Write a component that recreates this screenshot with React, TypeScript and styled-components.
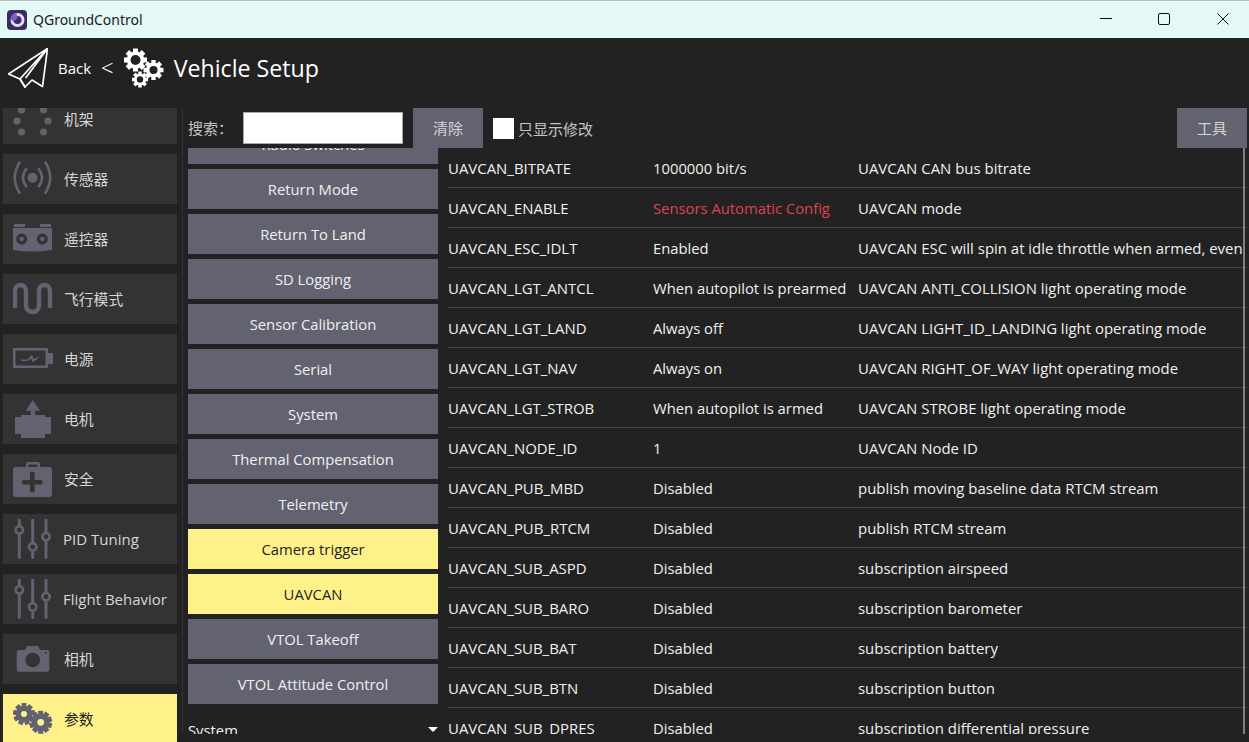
import React from "react";
import styled, { createGlobalStyle } from "styled-components";

const Global = createGlobalStyle`
  html, body { margin: 0; padding: 0; background: #222222; }
  body { font-family: "Open Sans", "Noto Sans CJK SC", sans-serif; overflow: hidden; }
  * { box-sizing: border-box; }
`;

const Window = styled.div`
  width: 1249px; height: 742px; overflow: hidden; display: flex; flex-direction: column; background: #222222;
`;
const TitleBar = styled.div`
  height: 38px; flex: none; background: #e4f8f8; border-top: 1px solid #bdbdbd;
  display: flex; align-items: center; padding-left: 7px; color: #1a1a1a;
  font-family: "Noto Sans", "Open Sans", sans-serif; font-size: 14px;
`;
const AppName = styled.span` margin-left: 6px; margin-right: auto; `;
const WinControls = styled.div` display: flex; align-items: center; gap: 46px; padding-right: 20px; margin-top: -1px; `;
const WinBtn = styled.div`
  width: 12px; height: 12px; display: flex;
  &:last-child { margin-left: 1px; }
`;

const TopBar = styled.div`
  height: 70px; flex: none; display: flex; align-items: center; color: #fff; padding: 0 0 10px 8px;
`;
const BackText = styled.span` font-size: 15px; margin-left: 10px; `;
const Chevron = styled.span` font-size: 22px; margin: 0 10px 0 10px; position: relative; top: -1px; font-weight: 300; `;
const Heading = styled.span` font-size: 23.2px; margin-left: 10px; `;

const Body = styled.div` flex: 1; display: flex; min-height: 0; `;
const Sidebar = styled.div` width: 182px; flex: none; padding-left: 3px; overflow: hidden; height: 634px; `;
const Divider = styled.div` width: 1px; height: 625px; flex: none; background: #333; `;
const SideScroll = styled.div` margin-top: -14px; display: flex; flex-direction: column; gap: 10px; `;
const SideBtn = styled.div<{ $active?: boolean }>`
  width: 174px; height: 50px; flex: none; display: flex; align-items: center;
  background: ${(p) => (p.$active ? "#fff18a" : "#333333")};
  color: ${(p) => (p.$active ? "#222" : "#d6d6d6")};
  font-size: 15px; padding-left: 10px;
`;
const SideLabel = styled.span<{ $cjk?: boolean }>`
  margin-top: ${(p) => (p.$cjk ? "-2px" : "0")};
  margin-left: ${(p) => (p.$cjk ? "1px" : "0")};
  font-size: ${(p) => (p.$cjk ? "14.8px" : "15px")};
`;
const SideIcon = styled.svg` width: 40px; height: 40px; flex: none; margin-right: 10px; `;

const Main = styled.div` flex: 1; display: flex; flex-direction: column; min-width: 0; padding-left: 5px; `;
const SearchRow = styled.div` height: 40px; flex: none; display: flex; align-items: center; color: #c4c4c4; font-size: 15px; `;
const SearchLabel = styled.span` width: 55px; margin-top: -1px; `;
const SearchInput = styled.div` width: 160px; height: 32px; background: #fff; border: 1px solid #a8a8a8; `;
const ToolBtn = styled.div<{ $push?: boolean }>`
  width: 70px; height: 40px; padding-bottom: 2px; background: #636270; color: #d4d4d4; display: flex; align-items: center; justify-content: center;
  font-size: 15px; margin-left: ${(p) => (p.$push ? "auto" : "10px")}; margin-right: ${(p) => (p.$push ? "2px" : "0")};
`;
const Check = styled.div` width: 21px; height: 21px; background: #fff; margin-left: 10px; margin-right: 4px; `;
const Content = styled.div` display: flex; height: 586px; flex: none; `;
const Groups = styled.div` width: 250px; flex: none; overflow: hidden; `;
const GroupScroll = styled.div` margin-top: -24px; display: flex; flex-direction: column; gap: 5px; `;
const GroupBtn = styled.div<{ $active?: boolean }>`
  height: 40px; flex: none; display: flex; align-items: center; justify-content: center;
  background: ${(p) => (p.$active ? "#fff18a" : "#636270")};
  color: ${(p) => (p.$active ? "#222" : "#f0f0f0")}; font-size: 14.8px;
`;
const GroupHeader = styled.div`
  height: 24px; margin-top: 5px; padding-top: 6px; display: flex; align-items: flex-start; justify-content: space-between; color: #f0f0f0; font-size: 14.8px;
`;
const Caret = styled.div`
  width: 0; height: 0; border-left: 5px solid transparent; border-right: 5px solid transparent; border-top: 5px solid #fff; margin-top: 7px;
`;
const Table = styled.div` flex: 1; min-width: 0; margin-left: 10px; margin-right: 2px; overflow: hidden; position: relative; `;
const Row = styled.div`
  height: 40px; padding-top: 1px; display: grid; grid-template-columns: 205px 205px 1fr; align-items: center; border-bottom: 1px solid #444; color: #f0f0f0; font-size: 14.95px; white-space: nowrap;
`;
const Cell = styled.span` overflow: hidden; `;
const ValueCell = styled.span<{ $red?: boolean }>` color: ${(p) => (p.$red ? "#dd444e" : "inherit")}; overflow: hidden; font-size: 14.8px; `;
const ScrollBar = styled.div` position: absolute; right: 2px; top: 0; width: 2px; height: 100%; background: #808080; `;

const f = "#636270";
const Frame = () => (
  <SideIcon viewBox="0 0 40 40">
    {[[8.5, 11], [30.5, 11], [4, 22], [35, 22], [8.5, 33], [30.5, 33]].map(([x, y], i) => (
      <circle key={i} cx={x} cy={y} r="3.6" fill={f} />
    ))}
  </SideIcon>
);
const Sensor = () => (
  <SideIcon viewBox="0 0 40 40" fill="none" stroke={f} strokeWidth="2.600">
    <circle cx="19.500" cy="18.700" r="5" fill={f} stroke="none" />
    <path d="M13.700 9.300Q6.300 18.700 13.700 28.100M25.300 9.300Q32.700 18.700 25.300 28.100" />
    <path d="M7 2.700Q-3.400 18.700 7 34.700M32 2.700Q42.400 18.700 32 34.700" />
  </SideIcon>
);
const Radio = () => (
  <SideIcon viewBox="0 0 40 40">
    <path d="M0 9h39v22q-19.500 3-39 0z" fill={f} />
    <path d="M1 5h11v3H1zM27 5h11v3H27z" fill={f} />
    <circle cx="8.700" cy="20" r="5.500" fill="#333" />
    <circle cx="8.700" cy="20" r="2.200" fill={f} />
    <circle cx="29.300" cy="20" r="5.500" fill="#333" />
    <circle cx="29.300" cy="20" r="2.200" fill={f} />
  </SideIcon>
);
const Wave = () => (
  <SideIcon viewBox="0 0 40 40" fill="none">
    <path d="M2 29V11.500a5.500 5.500 0 0 1 11 0V26.500a6.500 6.500 0 0 0 13 0V11.500a5.500 5.500 0 0 1 11 0V29" stroke={f} strokeWidth="4.400" />
  </SideIcon>
);
const Battery = () => (
  <SideIcon viewBox="0 0 40 40">
    <path d="M0 9h35v5h5v11h-5v4H0zM2.500 11.500v15h30v-15z" fill={f} fillRule="evenodd" />
    <path d="M8 20.500h7l4-5 1.500 4.500 7-3-7.500 6.500-2-4-3 2.500H8z" fill={f} />
  </SideIcon>
);
const Motor = () => (
  <SideIcon viewBox="0 0 40 40">
    <path d="M19.700 1l7.300 10.700h-5v4.300h-4.300v-4.300h-5z" fill={f} />
    <path d="M8 16h24v2h6v17h-6v4H8v-4H2V18h6z" fill={f} />
  </SideIcon>
);
const Kit = () => (
  <SideIcon viewBox="0 0 40 40">
    <path fillRule="evenodd" fill={f} d="M13 8V5q0-2 2-2h10q2 0 2 2v3h9q3 0 3 3v24q0 3-3 3H3q-3 0-3-3V11q0-3 3-3zM15.500 5.500V8h9V5.500zM17 13v8H9.300v4.600H17v7.700h4.600v-7.700h7.700V21h-7.700v-8z" />
  </SideIcon>
);
const Sliders = () => (
  <SideIcon viewBox="0 0 40 40" fill="none" stroke={f}>
    <path d="M6.300 1v37.500M19.700 1v37.500M33 1v37.500" strokeWidth="3" strokeLinecap="round" />
    <circle cx="6.300" cy="11" r="3.700" fill="#333" strokeWidth="2.600" />
    <circle cx="19.700" cy="28" r="3.700" fill="#333" strokeWidth="2.600" />
    <circle cx="33" cy="17.700" r="3.700" fill="#333" strokeWidth="2.600" />
  </SideIcon>
);
const Camera = () => (
  <SideIcon viewBox="0 0 40 40">
    <path fillRule="evenodd" fill={f} d="M6 11h6l2-4h11l2 4h7q2.300 0 2.300 2.300v17.400q0 2-2.300 2H6q-2.300 0-2.300-2V13.300Q3.700 11 6 11zM19.700 13.700a7.300 7.300 0 1 0 .01 0z" />
    <circle cx="32.700" cy="13.800" r="1" fill="#333" />
  </SideIcon>
);

const gear = (cx: number, cy: number, r: number, teeth: number, hole: number, color: string, bg: string) => {
  const els: React.ReactNode[] = [];
  for (let i = 0; i < teeth; i++) {
    const a = (360 / teeth) * i;
    els.push(
      <rect key={i} x={cx - r * 0.22} y={cy - r} width={r * 0.44} height={r * 0.5} fill={color} transform={`rotate(${a} ${cx} ${cy})`} />
    );
  }
  return (
    <g key={`${cx}-${cy}`}>
      {els}
      <circle cx={cx} cy={cy} r={r * 0.76} fill={color} />
      <circle cx={cx} cy={cy} r={hole} fill={bg} />
    </g>
  );
};
const GearSvg = styled.svg` flex: none; width: 40px; height: 40px; `;
const Gears = () => (
  <GearSvg viewBox="0 0 40 40">
    {gear(11.500, 12, 11.500, 8, 5, "#fff", "#222")}
    {gear(29.500, 22, 10, 8, 4, "#fff", "#222")}
    {gear(16, 31.500, 8, 8, 3.200, "#fff", "#222")}
  </GearSvg>
);
const ParamGears = () => (
  <SideIcon viewBox="0 0 40 40">
    {gear(11, 15, 11, 9, 3, f, "#fff18a")}
    {gear(27.700, 23.300, 11.500, 10, 3.400, f, "#fff18a")}
  </SideIcon>
);

const sideItems: [string, React.ReactNode, boolean, boolean?][] = [
  ["机架", <Frame />, true],
  ["传感器", <Sensor />, true],
  ["遥控器", <Radio />, true],
  ["飞行模式", <Wave />, true],
  ["电源", <Battery />, true],
  ["电机", <Motor />, true],
  ["安全", <Kit />, true],
  ["PID Tuning", <Sliders />, false],
  ["Flight Behavior", <Sliders />, false],
  ["相机", <Camera />, true],
  ["参数", <ParamGears />, true, true],
];
const groups: [string, boolean?][] = [
  ["Radio Switches"], ["Return Mode"], ["Return To Land"], ["SD Logging"], ["Sensor Calibration"], ["Serial"], ["System"],
  ["Thermal Compensation"], ["Telemetry"], ["Camera trigger", true], ["UAVCAN", true], ["VTOL Takeoff"], ["VTOL Attitude Control"],
];
const rows: [string, string, string, boolean?][] = [
  ["UAVCAN_BITRATE", "1000000 bit/s", "UAVCAN CAN bus bitrate"],
  ["UAVCAN_ENABLE", "Sensors Automatic Config", "UAVCAN mode", true],
  ["UAVCAN_ESC_IDLT", "Enabled", "UAVCAN ESC will spin at idle throttle when armed, even if all outputs are disarmed"],
  ["UAVCAN_LGT_ANTCL", "When autopilot is prearmed", "UAVCAN ANTI_COLLISION light operating mode"],
  ["UAVCAN_LGT_LAND", "Always off", "UAVCAN LIGHT_ID_LANDING light operating mode"],
  ["UAVCAN_LGT_NAV", "Always on", "UAVCAN RIGHT_OF_WAY light operating mode"],
  ["UAVCAN_LGT_STROB", "When autopilot is armed", "UAVCAN STROBE light operating mode"],
  ["UAVCAN_NODE_ID", "1", "UAVCAN Node ID"],
  ["UAVCAN_PUB_MBD", "Disabled", "publish moving baseline data RTCM stream"],
  ["UAVCAN_PUB_RTCM", "Disabled", "publish RTCM stream"],
  ["UAVCAN_SUB_ASPD", "Disabled", "subscription airspeed"],
  ["UAVCAN_SUB_BARO", "Disabled", "subscription barometer"],
  ["UAVCAN_SUB_BAT", "Disabled", "subscription battery"],
  ["UAVCAN_SUB_BTN", "Disabled", "subscription button"],
  ["UAVCAN_SUB_DPRES", "Disabled", "subscription differential pressure"],
];

export default function App() {
  return (
    <Window>
      <Global />
      <TitleBar>
        <svg width="20" height="20" viewBox="0 0 20 20">
          <rect width="20" height="20" rx="4" fill="#3a2a66" />
          <circle cx="10.500" cy="10" r="5.500" fill="none" stroke="#dfe0f5" strokeWidth="3" />
          <path d="M3.500 9a7 7 0 0 1 6-6l1 5-4 4z" fill="#7f5fc8" />
        </svg>
        <AppName>QGroundControl</AppName>
        <WinControls>
          <WinBtn><svg width="12" height="12"><path d="M0 5.500h12" stroke="#111" /></svg></WinBtn>
          <WinBtn><svg width="12" height="12"><rect x=".5" y=".5" width="11" height="11" rx="1.500" fill="none" stroke="#111" /></svg></WinBtn>
          <WinBtn><svg width="12" height="12"><path d="M.5.5l11 11M11.500.5l-11 11" stroke="#111" /></svg></WinBtn>
        </WinControls>
      </TitleBar>
      <TopBar>
        <svg width="40" height="40" viewBox="0 0 40 40" fill="none" stroke="#fff" strokeWidth="1.700" strokeLinejoin="round" strokeLinecap="round">
          <path d="M39.500 .5L.5 26l11.500 5 5 8 7-7 10.500 6.500z" />
          <path d="M39.500 .5L12 31l5 8M39.500 .5L18 29.500" />
        </svg>
        <BackText>Back</BackText>
        <Chevron>&lt;</Chevron>
        <Gears />
        <Heading>Vehicle Setup</Heading>
      </TopBar>
      <Body>
        <Sidebar>
          <SideScroll>
            {sideItems.map(([label, icon, cjk, active]) => (
              <SideBtn key={label} $active={active}>{icon}<SideLabel $cjk={cjk}>{label}</SideLabel></SideBtn>
            ))}
          </SideScroll>
        </Sidebar>
        <Divider />
        <Main>
          <SearchRow>
            <SearchLabel>搜索：</SearchLabel>
            <SearchInput />
            <ToolBtn>清除</ToolBtn>
            <Check />
            只显示修改
            <ToolBtn $push>工具</ToolBtn>
          </SearchRow>
          <Content>
            <Groups>
              <GroupScroll>
                {groups.map(([g, active]) => (
                  <GroupBtn key={g} $active={active}>{g}</GroupBtn>
                ))}
                <GroupHeader>System<Caret /></GroupHeader>
              </GroupScroll>
            </Groups>
            <Table>
              {rows.map(([a, b, c, red]) => (
                <Row key={a}>
                  <Cell>{a}</Cell>
                  <ValueCell $red={red}>{b}</ValueCell>
                  <Cell>{c}</Cell>
                </Row>
              ))}
              <ScrollBar />
            </Table>
          </Content>
        </Main>
      </Body>
    </Window>
  );
}
